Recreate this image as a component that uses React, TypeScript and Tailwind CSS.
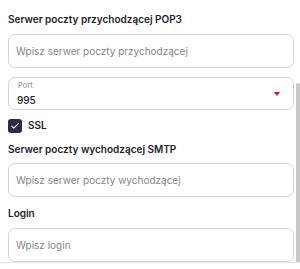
import { Check } from 'lucide-react'

const font = { fontFamily: 'Inter, "Noto Sans", sans-serif' }

function Field({ placeholder }: { placeholder: string }) {
  return (
    <input
      placeholder={placeholder}
      className="h-[34px] w-full rounded-[7px] border border-[#d4d4d8] bg-white px-[7px] text-[10px] text-[#222] outline-none placeholder:text-[#85858a]"
    />
  )
}

function Heading({ children, className = '' }: { children: string; className?: string }) {
  return (
    <div className={`text-[10px] font-semibold leading-[14px] text-[#222226] ${className}`}>{children}</div>
  )
}

export default function App() {
  return (
    <div className="h-[269px] w-[300px] overflow-hidden bg-white" style={font}>
      <div className="flex h-[263px] border-b border-[#e4e4e7]">
        <div className="flex w-[294px] flex-col pl-[8px] pt-[12px]">
          {/* POP3 */}
          <Heading>Serwer poczty przychodzącej POP3</Heading>
          <div className="mt-[8px]">
            <Field placeholder="Wpisz serwer poczty przychodzącej" />
          </div>

          {/* Port */}
          <div className="mt-[9px] flex h-[33px] items-center rounded-[7px] border border-[#d4d4d8] pl-[8px] pr-[13px]">
            <div className="flex flex-1 flex-col">
              <span className="pl-[1px] text-[7.5px] leading-[10px] text-[#8a8a8f]">Port</span>
              <span className="mt-[3px] text-[10px] font-medium leading-[12px] text-[#222226]">995</span>
            </div>
            <svg width="6" height="4" viewBox="0 0 6 4">
              <path d="M0 0h6L3 4z" fill="#d7141a" />
            </svg>
          </div>

          {/* SSL */}
          <label className="mt-[8px] flex items-center gap-[6px]">
            <span className="flex h-[14px] w-[14px] items-center justify-center rounded-[3px] bg-[#2d2a48]">
              <Check size={10} strokeWidth={2.5} className="text-white" />
            </span>
            <span className="text-[10px] font-semibold text-[#222226]">SSL</span>
          </label>

          {/* SMTP */}
          <Heading className="mt-[9px]">Serwer poczty wychodzącej SMTP</Heading>
          <div className="mt-[7px]">
            <Field placeholder="Wpisz serwer poczty wychodzącej" />
          </div>

          {/* Login */}
          <Heading className="mt-[9px]">Login</Heading>
          <div className="mt-[8px]">
            <Field placeholder="Wpisz login" />
          </div>
        </div>
        <div className="flex flex-1 flex-col pt-[83px]">
          <div className="ml-auto h-full w-[4px] rounded-t-[2px] bg-[#c8c8c8]" />
        </div>
      </div>
    </div>
  )
}
